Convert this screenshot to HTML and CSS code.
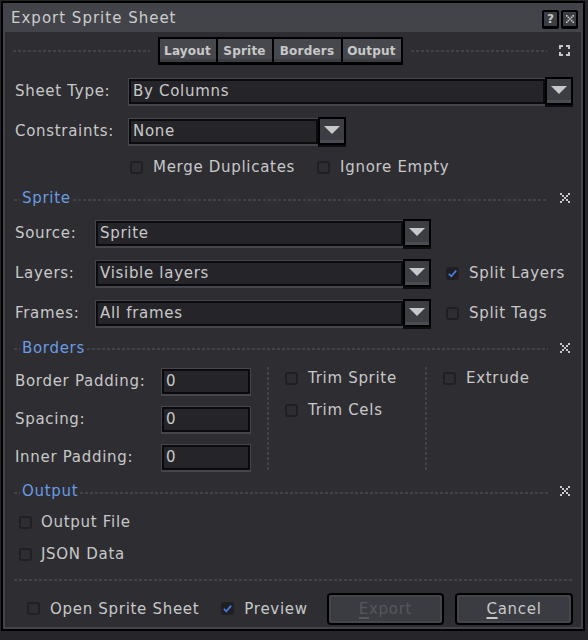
FILE: index.html
```html
<!DOCTYPE html>
<html>
<head>
<meta charset="utf-8">
<link rel="stylesheet" href="styles.css">
</head>
<body>
<div class="window">
  <div class="titlebar">
    <span class="title">Export Sprite Sheet</span>
    <div class="tbtns">
      <span class="tbtn">?</span>
      <span class="tbtn"><svg width="8" height="8" viewBox="0 0 10 10"><g fill="#c8c8c8"><rect x="0" y="0" width="2" height="2"/><rect x="8" y="0" width="2" height="2"/><rect x="2" y="2" width="2" height="2"/><rect x="6" y="2" width="2" height="2"/><rect x="4" y="4" width="2" height="2"/><rect x="2" y="6" width="2" height="2"/><rect x="6" y="6" width="2" height="2"/><rect x="0" y="8" width="2" height="2"/><rect x="8" y="8" width="2" height="2"/></g></svg></span>
    </div>
  </div>
  <div class="body">
    <div class="tabsrow">
      <span class="dash"></span>
      <div class="tabs">
        <span class="tab t1">Layout</span><span class="tab t2">Sprite</span><span class="tab t3">Borders</span><span class="tab t4">Output</span>
      </div>
      <span class="dash"></span>
      <svg class="expand" width="11" height="11" viewBox="0 0 11 11"><g fill="#c8c8c8"><rect x="0" y="0" width="4" height="2"/><rect x="0" y="0" width="2" height="4"/><rect x="7" y="0" width="4" height="2"/><rect x="9" y="0" width="2" height="4"/><rect x="0" y="9" width="4" height="2"/><rect x="0" y="7" width="2" height="4"/><rect x="7" y="9" width="4" height="2"/><rect x="9" y="7" width="2" height="4"/></g></svg>
    </div>

    <div class="topblock">
      <div class="row">
        <span class="lbl lbl-top">Sheet Type:</span>
        <div class="combo"><div class="field w-sheet">By Columns</div><span class="dd"><i class="tri"></i></span></div>
      </div>
      <div class="row">
        <span class="lbl lbl-top">Constraints:</span>
        <div class="combo"><div class="field w-cons">None</div><span class="dd"><i class="tri"></i></span></div>
      </div>
      <div class="cbrow">
        <span class="item"><span class="cb"></span>Merge Duplicates</span>
        <span class="item"><span class="cb"></span>Ignore Empty</span>
      </div>
    </div>

    <div class="header h30">
      <span class="hdash-s"></span><span class="htext">Sprite</span><span class="hdash"></span>
      <svg class="xicon" width="10" height="10" viewBox="0 0 10 10"><g fill="#c8c8c8"><rect x="0" y="0" width="2" height="2"/><rect x="8" y="0" width="2" height="2"/><rect x="2" y="2" width="2" height="2"/><rect x="6" y="2" width="2" height="2"/><rect x="4" y="4" width="2" height="2"/><rect x="2" y="6" width="2" height="2"/><rect x="6" y="6" width="2" height="2"/><rect x="0" y="8" width="2" height="2"/><rect x="8" y="8" width="2" height="2"/></g></svg>
    </div>
    <div class="row">
      <span class="lbl lbl-sp">Source:</span>
      <div class="combo"><div class="field w-sp">Sprite</div><span class="dd"><i class="tri"></i></span></div>
    </div>
    <div class="row">
      <span class="lbl lbl-sp">Layers:</span>
      <div class="combo"><div class="field w-sp">Visible layers</div><span class="dd"><i class="tri"></i></span></div>
      <span class="item side"><span class="cb on"><svg width="11" height="11" viewBox="0 0 11 11"><path d="M1 6 L4 9 L10 2" fill="none" stroke="#4a7fe3" stroke-width="2"/></svg></span>Split Layers</span>
    </div>
    <div class="row">
      <span class="lbl lbl-sp">Frames:</span>
      <div class="combo"><div class="field w-sp">All frames</div><span class="dd"><i class="tri"></i></span></div>
      <span class="item side"><span class="cb"></span>Split Tags</span>
    </div>

    <div class="header h29">
      <span class="hdash-s"></span><span class="htext">Borders</span><span class="hdash"></span>
      <svg class="xicon" width="10" height="10" viewBox="0 0 10 10"><g fill="#c8c8c8"><rect x="0" y="0" width="2" height="2"/><rect x="8" y="0" width="2" height="2"/><rect x="2" y="2" width="2" height="2"/><rect x="6" y="2" width="2" height="2"/><rect x="4" y="4" width="2" height="2"/><rect x="2" y="6" width="2" height="2"/><rect x="6" y="6" width="2" height="2"/><rect x="0" y="8" width="2" height="2"/><rect x="8" y="8" width="2" height="2"/></g></svg>
    </div>
    <div class="borders">
      <div class="bcol">
        <div class="brow"><span class="lbl lbl-b">Border Padding:</span><div class="field w-num">0</div></div>
        <div class="brow"><span class="lbl lbl-b">Spacing:</span><div class="field w-num">0</div></div>
        <div class="brow"><span class="lbl lbl-b">Inner Padding:</span><div class="field w-num">0</div></div>
      </div>
      <span class="vline"></span>
      <div class="mcol">
        <div class="crow"><span class="item"><span class="cb"></span>Trim Sprite</span></div>
        <div class="crow"><span class="item"><span class="cb"></span>Trim Cels</span></div>
      </div>
      <span class="vline"></span>
      <div class="rcol">
        <div class="crow"><span class="item"><span class="cb"></span>Extrude</span></div>
      </div>
    </div>

    <div class="header h30">
      <span class="hdash-s"></span><span class="htext">Output</span><span class="hdash"></span>
      <svg class="xicon" width="10" height="10" viewBox="0 0 10 10"><g fill="#c8c8c8"><rect x="0" y="0" width="2" height="2"/><rect x="8" y="0" width="2" height="2"/><rect x="2" y="2" width="2" height="2"/><rect x="6" y="2" width="2" height="2"/><rect x="4" y="4" width="2" height="2"/><rect x="2" y="6" width="2" height="2"/><rect x="6" y="6" width="2" height="2"/><rect x="0" y="8" width="2" height="2"/><rect x="8" y="8" width="2" height="2"/></g></svg>
    </div>
    <div class="orow"><span class="item"><span class="cb"></span>Output File</span></div>
    <div class="orow"><span class="item"><span class="cb"></span>JSON Data</span></div>

    <div class="sep"><span class="hdash"></span></div>

    <div class="bottom">
      <span class="item"><span class="cb"></span>Open Sprite Sheet</span>
      <span class="item preview"><span class="cb on"><svg width="11" height="11" viewBox="0 0 11 11"><path d="M1 6 L4 9 L10 2" fill="none" stroke="#4a7fe3" stroke-width="2"/></svg></span>Preview</span>
      <div class="btns">
        <span class="btn disabled"><u>E</u>xport</span>
        <span class="btn"><u>C</u>ancel</span>
      </div>
    </div>
  </div>
</div>
</body>
</html>
```

FILE: styles.css
```css
* { box-sizing: border-box; }
html, body { margin: 0; padding: 0; }
body {
  background: #26262a;
  width: 588px;
  height: 640px;
  overflow: hidden;
  font-family: "DejaVu Sans", "Liberation Sans", sans-serif;
  font-size: 15px;
  letter-spacing: 0.7px;
  color: #c8c8c8;
}
.window {
  margin: 1px 0 0 1px;
  width: 584px;
  height: 630px;
  border: 2px solid #000;
  background: #43444a;
  display: flex;
  flex-direction: column;
}
.titlebar {
  height: 29px;
  flex: none;
  display: flex;
  align-items: center;
  padding: 0 5px 0 8px;
}
.title { flex: 1; color: #cdcdcd; letter-spacing: 1px; }
.tbtns { display: flex; gap: 2px; margin-top: 2px; }
.tbtn {
  width: 17px;
  height: 18px;
  border: 2px solid #000;
  border-radius: 2px;
  background: #3d3e44;
  box-shadow: 0 1px 0 #000;
  display: flex;
  align-items: center;
  justify-content: center;
  font-size: 12px;
  font-weight: bold;
  letter-spacing: 0;
  color: #c8c8c8;
}
.body {
  flex: 1;
  margin: 0 2px 2px 2px;
  background: #2d2d32;
  display: flex;
  flex-direction: column;
}

/* tabs */
.tabsrow {
  margin-top: 5px;
  height: 27px;
  display: flex;
  align-items: center;
  gap: 8px;
  padding: 0 11px 0 8px;
}
.dash {
  flex: 1;
  height: 2px;
  background: repeating-linear-gradient(90deg, #424348 0 3px, transparent 3px 5px);
}
.tabs {
  display: flex;
  height: 27px;
  border: 2px solid #000;
  box-shadow: 0 1px 0 #000;
}
.tab {
  display: flex;
  align-items: center;
  justify-content: center;
  font-size: 12px;
  font-weight: bold;
  letter-spacing: 0.2px;
  background: #47484e;
  box-shadow: inset 0 -3px 0 #3c3d43;
  border-right: 2px solid #000;
  color: #c8c8c8;
}
.tab.t4 { border-right: none; }
.t1 { width: 58px; }
.t2 { width: 56px; }
.t3 { width: 69px; }
.t4 { width: 58px; }
.expand { margin-left: 4px; flex: none; }

/* rows */
.topblock { margin-top: 7px; }
.row {
  height: 40px;
  display: flex;
  align-items: center;
  padding-left: 10px;
}
.lbl { flex: none; white-space: nowrap; }
.lbl-top { width: 114px; }
.lbl-sp { width: 81px; }
.lbl-b { width: 147px; }

.combo { display: flex; align-items: center; }
.field {
  height: 25px;
  border: 2px solid #0b0b0d;
  background: #252529;
  box-shadow: 0 0 0 1px #45464c, 0 1px 0 1px #45464c;
  padding-left: 2px;
  display: flex;
  align-items: center;
  white-space: nowrap;
  color: #c8c8c8;
}
.w-sheet { width: 416px; }
.w-cons { width: 189px; }
.w-sp { width: 307px; }
.w-num { width: 88px; }
.dd {
  width: 28px;
  height: 28px;
  border: 2px solid #000;
  background: #3d3e44;
  box-shadow: inset 0 -3px 0 #4b4c52, 0 2px 0 #0d0d0f;
  display: flex;
  justify-content: center;
  padding-top: 7px;
  flex: none;
}
.tri {
  width: 0;
  height: 0;
  border-left: 8px solid transparent;
  border-right: 8px solid transparent;
  border-top: 8px solid #c8c8c8;
}

/* checkbox */
.item { display: flex; align-items: center; gap: 10px; white-space: nowrap; }
.cb {
  width: 13px;
  height: 13px;
  border: 2px solid #202024;
  border-radius: 3px;
  flex: none;
  display: flex;
  align-items: center;
  justify-content: center;
}
.cb.on { background: #1f1f23; }
.cbrow {
  height: 32px;
  display: flex;
  align-items: center;
  padding-left: 125px;
  gap: 22px;
}
.side { margin-left: 15px; }

/* headers */
.header {
  display: flex;
  align-items: center;
  padding: 0 11px 0 9px;
}
.h30 { height: 30px; }
.h29 { height: 29px; }
.hdash-s {
  width: 6px;
  height: 2px;
  margin-top: 3px;
  background: repeating-linear-gradient(90deg, #424348 0 3px, transparent 3px 5px);
}
.htext { color: #6b9be2; margin: 0 2px 0 2px; }
.hdash {
  flex: 1;
  height: 2px;
  margin-top: 3px;
  background: repeating-linear-gradient(90deg, #424348 0 3px, transparent 3px 5px);
}
.xicon { margin-left: 12px; flex: none; }

/* borders block */
.borders { height: 114px; display: flex; }
.bcol { padding-left: 10px; width: 262px; }
.brow { height: 38px; display: flex; align-items: center; }
.vline {
  width: 2px;
  margin: 5px 0 4px 0;
  background: repeating-linear-gradient(180deg, #424348 0 3px, transparent 3px 5px);
}
.mcol { width: 156px; padding-left: 16px; }
.rcol { flex: 1; padding-left: 16px; }
.crow { height: 32px; display: flex; align-items: center; }

/* output */
.orow { height: 32px; display: flex; align-items: center; padding-left: 14px; }
.orow .item { gap: 9px; }

.sep { height: 20px; display: flex; align-items: center; padding: 0 8px 0 9px; }
.sep .hdash { margin-top: 0; }

.bottom {
  height: 37px;
  display: flex;
  align-items: center;
  padding: 0 8px 0 22px;
}
.preview { margin-left: 22px; }
.btns { margin-left: auto; display: flex; gap: 11px; flex: none; }
.btn {
  width: 117px;
  height: 32px;
  border: 2px solid #000;
  border-radius: 4px;
  background: #3b3c42;
  box-shadow: inset 0 0 0 2px #45464c;
  display: flex;
  align-items: center;
  justify-content: center;
  color: #c8c8c8;
  flex: none;
}
.btn + .btn { width: 118px; }
.btn.disabled { color: #56575d; }
.btn u { text-underline-offset: 3px; text-decoration-thickness: 2px; }
```
